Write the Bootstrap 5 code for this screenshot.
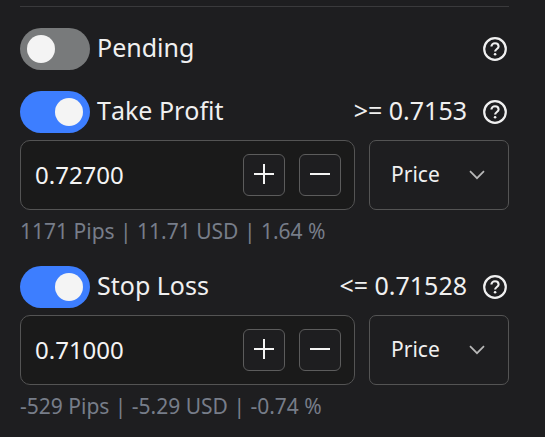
<!DOCTYPE html>
<html lang="en" data-bs-theme="dark">
<head>
<meta charset="utf-8">
<meta name="viewport" content="width=device-width, initial-scale=1">
<title>Order options</title>
<link href="https://cdn.jsdelivr.net/npm/bootstrap@5.3.0/dist/css/bootstrap.min.css" rel="stylesheet">
<style>
  body {
    background: #1e1e20;
    color: #f0f0f0;
    font-family: "Noto Sans", sans-serif;
    font-size: 25px;
    line-height: 34px;
    font-kerning: none;
    font-variant-ligatures: none;
  }
  .order-panel { padding: 6px 36px 0 20px; }
  .divider { border-top: 1px solid #3a3a3c; margin-bottom: 21px; }
  .option-row { height: 42px; }
  .option-row.spaced { margin-top: 21px; }
  .option-row .form-switch { gap: 7px; }
  .option-row .form-switch .form-check-input {
    width: 70px;
    height: 42px;
    border: 0;
    border-radius: 21px;
    background-color: #787a7b;
    background-image: url("data:image/svg+xml,%3csvg xmlns='http://www.w3.org/2000/svg' viewBox='0 0 28 28'%3e%3ccircle cx='14' cy='14' r='14' fill='%23f4f4f4'/%3e%3c/svg%3e");
    background-size: 28px 28px;
    background-position: left 7px center;
  }
  .option-row .form-switch .form-check-input:checked {
    background-color: #3d7eff;
    background-position: right 7px center;
  }
  .option-row label, .limit { padding-bottom: 4px; }
  .limit { margin-right: 14px; }
  .help-btn { width: 28px; height: 28px; color: #f0f0f0; }
  .field-row { margin-top: 7px; gap: 14px; }
  .amount-box {
    height: 70px;
    padding: 0 13px 0 14px;
    gap: 14px;
    border: 1px solid #545454;
    border-radius: 10px;
    background: #1a1a1a;
  }
  .amount-box input { font-size: 24px; color: #f4f4f4; min-width: 0; line-height: 34px; outline: 0; }
  .step-btn {
    width: 42px;
    height: 42px;
    border: 1px solid #5c5c5c;
    border-radius: 6px;
    background: #1e1e20;
    color: #f4f4f4;
  }
  .step-btn svg { margin-bottom: 2px; }
  .unit-select.form-select {
    width: 140px;
    height: 70px;
    padding: 0 48px 0 21px;
    border: 1px solid #545454;
    border-radius: 7px;
    color: #f0f0f0;
    font-size: 21px;
    background-color: #1e1e20;
    background-image: url("data:image/svg+xml,%3csvg xmlns='http://www.w3.org/2000/svg' viewBox='0 0 16 10' fill='none' stroke='%23b8b8b8' stroke-width='1.7'%3e%3cpath d='M1 1.2l7 7 7-7'/%3e%3c/svg%3e");
    background-size: 16px 10px;
    background-position: right 23px center;
  }
  .hint { margin-top: 7px; font-size: 21px; line-height: 28px; color: #777d89; }
</style>
<script src="https://cdn.jsdelivr.net/npm/bootstrap@5.3.0/dist/js/bootstrap.bundle.min.js"></script>
</head>
<body>
<svg class="d-none" aria-hidden="true">
  <symbol id="help" viewBox="0 0 28 28">
    <circle cx="14" cy="14" r="10.8" fill="none" stroke="currentColor" stroke-width="2.2"/>
    <path d="M10.4 11.6c0-2 1.6-3.4 3.6-3.4s3.6 1.3 3.6 3.2c0 2.5-3.5 2.7-3.5 5.2" fill="none" stroke="currentColor" stroke-width="2.1"/>
    <circle cx="14.1" cy="19.3" r="1.3" fill="currentColor"/>
  </symbol>
  <symbol id="plus" viewBox="0 0 20 20"><path d="M0 10h20M10 0v20" stroke="currentColor" stroke-width="2"/></symbol>
  <symbol id="minus" viewBox="0 0 20 20"><path d="M0 10h20" stroke="currentColor" stroke-width="2"/></symbol>
</svg>
<main class="order-panel">
  <div class="divider"></div>

  <div class="option-row d-flex align-items-center">
    <div class="form-switch d-flex align-items-center p-0 m-0 me-auto">
      <input class="form-check-input m-0" type="checkbox" role="switch" id="pending">
      <label for="pending">Pending</label>
    </div>
    <button type="button" class="help-btn btn p-0 border-0 d-flex" aria-label="Help on pending"><svg width="28" height="28"><use href="#help"/></svg></button>
  </div>

  <section>
    <div class="option-row spaced d-flex align-items-center">
      <div class="form-switch d-flex align-items-center p-0 m-0 me-auto">
        <input class="form-check-input m-0" type="checkbox" role="switch" id="tp" checked>
        <label for="tp">Take Profit</label>
      </div>
      <span class="limit">&gt;= 0.7153</span>
      <button type="button" class="help-btn btn p-0 border-0 d-flex" aria-label="Help on take profit"><svg width="28" height="28"><use href="#help"/></svg></button>
    </div>
    <div class="field-row d-flex">
      <div class="amount-box d-flex align-items-center flex-grow-1">
        <input class="form-control-plaintext p-0 flex-grow-1" type="text" inputmode="decimal" value="0.72700" aria-label="Take profit price">
        <button type="button" class="step-btn btn p-0 flex-shrink-0 d-flex align-items-center justify-content-center" aria-label="Increase"><svg width="20" height="20"><use href="#plus"/></svg></button>
        <button type="button" class="step-btn btn p-0 flex-shrink-0 d-flex align-items-center justify-content-center" aria-label="Decrease"><svg width="20" height="20"><use href="#minus"/></svg></button>
      </div>
      <select class="unit-select form-select flex-shrink-0" aria-label="Take profit unit"><option>Price</option></select>
    </div>
    <div class="hint">1171 Pips | 11.71 USD | 1.64 %</div>
  </section>

  <section>
    <div class="option-row spaced d-flex align-items-center">
      <div class="form-switch d-flex align-items-center p-0 m-0 me-auto">
        <input class="form-check-input m-0" type="checkbox" role="switch" id="sl" checked>
        <label for="sl">Stop Loss</label>
      </div>
      <span class="limit">&lt;= 0.71528</span>
      <button type="button" class="help-btn btn p-0 border-0 d-flex" aria-label="Help on stop loss"><svg width="28" height="28"><use href="#help"/></svg></button>
    </div>
    <div class="field-row d-flex">
      <div class="amount-box d-flex align-items-center flex-grow-1">
        <input class="form-control-plaintext p-0 flex-grow-1" type="text" inputmode="decimal" value="0.71000" aria-label="Stop loss price">
        <button type="button" class="step-btn btn p-0 flex-shrink-0 d-flex align-items-center justify-content-center" aria-label="Increase"><svg width="20" height="20"><use href="#plus"/></svg></button>
        <button type="button" class="step-btn btn p-0 flex-shrink-0 d-flex align-items-center justify-content-center" aria-label="Decrease"><svg width="20" height="20"><use href="#minus"/></svg></button>
      </div>
      <select class="unit-select form-select flex-shrink-0" aria-label="Stop loss unit"><option>Price</option></select>
    </div>
    <div class="hint">-529 Pips | -5.29 USD | -0.74 %</div>
  </section>
</main>
</body>
</html>
